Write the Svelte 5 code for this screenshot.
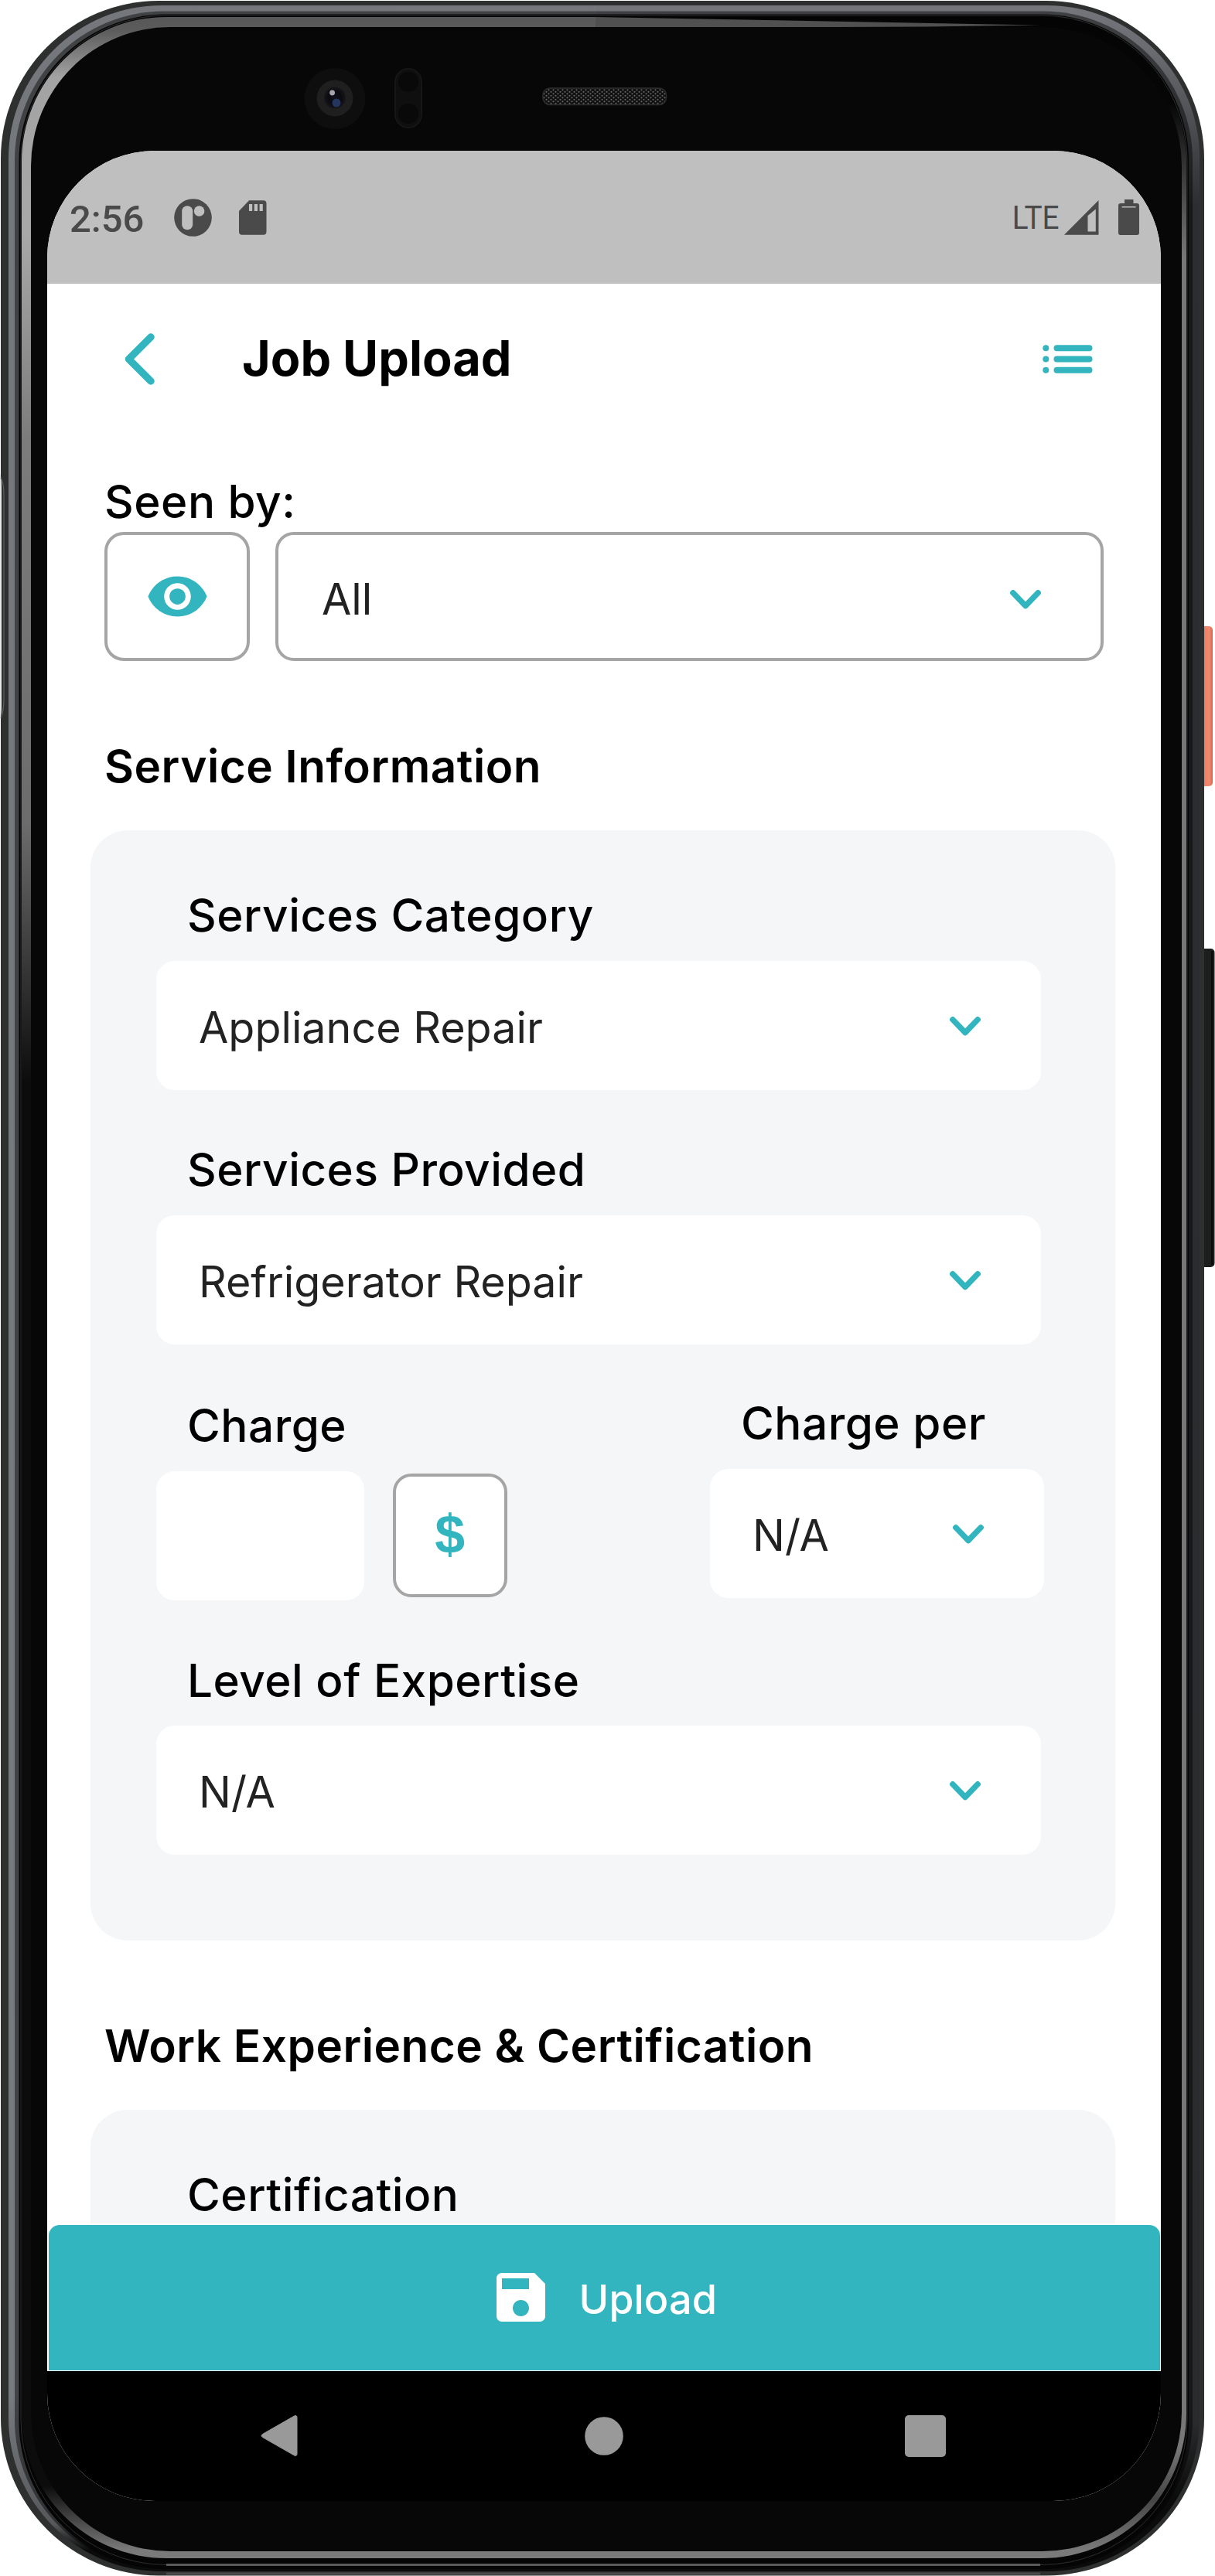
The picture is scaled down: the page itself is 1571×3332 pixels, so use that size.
<script>
  const fields = [
    { label: 'Services Category', value: 'Appliance Repair' },
    { label: 'Services Provided', value: 'Refrigerator Repair' }
  ];
</script>

{#snippet chevron()}
  <svg class="chevron" viewBox="0 0 40 25" width="40" height="25">
    <path d="M3.8 3.8 20 20.6 36.2 3.8" />
  </svg>
{/snippet}

{#snippet select(value)}
  <div class="select">
    <span>{value}</span>
    {@render chevron()}
  </div>
{/snippet}

<div class="phone">
  <!-- Device body -->
  <svg class="chassis" viewBox="0 0 1571 3332" width="1571" height="3332" aria-hidden="true">
    <defs>
      <linearGradient id="orange" x1="0" x2="1" y1="0" y2="0">
        <stop offset="0" stop-color="#c9543c" /><stop offset=".3" stop-color="#ee7b5f" />
        <stop offset=".75" stop-color="#f08a70" /><stop offset="1" stop-color="#d9644a" />
      </linearGradient>
      <linearGradient id="metalL" gradientUnits="userSpaceOnUse" x1="0" x2="0" y1="0" y2="3332">
        <stop offset="0" stop-color="#74777b" /><stop offset=".93" stop-color="#777a7f" />
        <stop offset=".98" stop-color="#55575a" /><stop offset=".99" stop-color="#0b0b0b" />
      </linearGradient>
      <linearGradient id="metalR" gradientUnits="userSpaceOnUse" x1="0" x2="0" y1="0" y2="3332">
        <stop offset="0" stop-color="#74777b" /><stop offset=".02" stop-color="#696b70" />
        <stop offset=".08" stop-color="#2b2d30" /><stop offset=".94" stop-color="#2a2b2d" />
        <stop offset=".97" stop-color="#0b0b0b" />
      </linearGradient>
      <linearGradient id="shineL" gradientUnits="userSpaceOnUse" x1="0" x2="0" y1="0" y2="3332">
        <stop offset="0" stop-color="#515151" /><stop offset=".012" stop-color="#5c5c5c" />
        <stop offset=".03" stop-color="#a3a3a3" /><stop offset=".09" stop-color="#a8a8a8" />
        <stop offset=".17" stop-color="#7c7c7c" /><stop offset=".32" stop-color="#6c6c6c" />
        <stop offset=".42" stop-color="#0c0c0d" /><stop offset=".965" stop-color="#0c0c0d" />
        <stop offset=".99" stop-color="#7a7a7a" />
      </linearGradient>
      <linearGradient id="shineR" gradientUnits="userSpaceOnUse" x1="0" x2="0" y1="0" y2="3332">
        <stop offset="0" stop-color="#040404" /><stop offset=".04" stop-color="#060606" />
        <stop offset=".1" stop-color="#777" /><stop offset=".95" stop-color="#777" />
        <stop offset=".97" stop-color="#454545" /><stop offset=".99" stop-color="#7a7a7a" />
      </linearGradient>
      <radialGradient id="lens">
        <stop offset="0" stop-color="#10121c" /><stop offset=".6" stop-color="#0a0a10" /><stop offset="1" stop-color="#17171a" />
      </radialGradient>
      <pattern id="mesh" width="6" height="5" patternUnits="userSpaceOnUse">
        <rect width="6" height="5" fill="#101010" />
        <circle cx="1.5" cy="1.3" r="1.1" fill="#626262" /><circle cx="4.5" cy="3.8" r="1.1" fill="#626262" />
      </pattern>
      <clipPath id="leftHalf"><rect x="0" y="0" width="771" height="3332" /></clipPath>
      <clipPath id="rightHalf"><rect x="771" y="0" width="800" height="3332" /></clipPath>
    </defs>

    <rect x="1550" y="810" width="18" height="207" rx="5" fill="url(#orange)" />
    <rect x="1550" y="1227" width="20.5" height="412" rx="5" fill="#1c1d1d" />
    <rect x="1566" y="1230" width="2" height="406" fill="#0a0a0a" />

    <rect x="1" y="1" width="1556" height="3330.5" rx="204" fill="#2e2f2f" />
    <path d="M0 612q2 5 2 20v280q0 12-2 18z" fill="#e3e8e5" />
    <path d="M1 618q4 6 4 22v265q0 14-4 24" fill="none" stroke="#5b6561" stroke-width="1.2" />
    <g clip-path="url(#leftHalf)">
      <rect x="11" y="7" width="1542" height="3319" rx="198" fill="url(#metalL)" />
    </g>
    <g clip-path="url(#rightHalf)">
      <rect x="8" y="7" width="1543" height="3319" rx="197" fill="url(#metalR)" />
    </g>
    <rect x="19" y="14.500" width="1523" height="3308.500" rx="193" fill="#000" opacity=".45" />
    <rect x="24.500" y="18.500" width="1512.500" height="3304" rx="190" fill="#050505" />
    <rect x="27" y="20" width="1508" height="3297.500" rx="188" fill="none" stroke="#2d2d2f" stroke-width="1" />
    <path d="M215 3317.500h1130" stroke="#5a5a5a" stroke-width="3" />
    <path d="M215 3329h1130" stroke="#4a4a4a" stroke-width="3" />
    <g clip-path="url(#leftHalf)">
      <rect x="28" y="22" width="1506" height="3287" rx="187" fill="url(#shineL)" />
    </g>
    <g clip-path="url(#rightHalf)">
      <rect x="28" y="22" width="1506" height="3287" rx="187" fill="url(#shineR)" />
    </g>
    <path d="M770 22 1345 32.500 1200 34.500 770 36z" fill="#505050" />
    <rect x="40" y="35" width="1488" height="3265" rx="180" fill="#070708" />

    <!-- Front camera, sensor and earpiece -->
    <circle cx="433" cy="127.500" r="39.500" fill="#0e0e0f" />
    <circle cx="433" cy="127" r="23.500" fill="#1f1f20" />
    <circle cx="433" cy="126.500" r="14" fill="url(#lens)" />
    <circle cx="435" cy="133" r="5.500" fill="#26355e" />
    <circle cx="429.600" cy="120" r="3.400" fill="#a5a5ab" />
    <rect x="511" y="89" width="34" height="76" rx="17" fill="#0f0f10" stroke="#161617" stroke-width="2" />
    <circle cx="528" cy="106" r="13" fill="#09090a" />
    <circle cx="528" cy="147" r="13" fill="#09090a" />
    <rect x="702" y="114" width="159.500" height="21.500" rx="9" fill="url(#mesh)" stroke="#2c2c2c" stroke-width="1.500" />
  </svg>

  <div class="screen">
    <div class="status">
      <span class="time">2:56</span>
      <svg class="badge" viewBox="0 0 49 49" width="49" height="49">
        <circle cx="24.500" cy="24.500" r="24.300" fill="#4a4a4a" />
        <rect x="10.200" y="9.200" width="14" height="31" rx="7" fill="#bfbfbf" />
        <circle cx="32.600" cy="16" r="6.800" fill="#bfbfbf" />
      </svg>
      <svg viewBox="0 0 36 45" width="36" height="45">
        <path d="M13 .3h18.500q4 0 4 4v36.400q0 4-4 4H4q-4 0-4-4V14z" fill="#4a4a4a" />
        <path d="M13 5h4.200v9H13zM19.800 5H24v9h-4.200zM26.600 5h4.200v9h-4.200z" fill="#bfbfbf" />
      </svg>
      <span class="network">LTE</span>
      <svg class="signal" viewBox="0 0 45 45" width="45" height="45">
        <path d="M44.500 0v44.700H0zM30.500 20v20.500h10.300V11.500z" fill="#4a4a4a" fill-rule="evenodd" />
      </svg>
      <svg viewBox="0 0 27 46" width="27" height="46">
        <path d="M8 0h11.500v5H24q3 0 3 3v35q0 3-3 3H3q-3 0-3-3V8q0-3 3-3h5z" fill="#4a4a4a" />
        <path d="M4.600 9.800h17.900" stroke="#bfbfbf" stroke-width="1.600" />
      </svg>
    </div>

    <main>
      <header>
        <svg viewBox="0 0 39 67" width="39" height="67">
          <path class="back" d="M34 5 5.500 33.500 34 62" />
        </svg>
        <h1>Job Upload</h1>
        <svg class="menu" viewBox="0 0 65 37" width="65" height="37">
          {#each [4.200, 18.500, 32.700] as y}
            <circle cx="4.300" cy={y} r="4" />
            <rect x="14.500" y={y - 4} width="50" height="8" rx="4" />
          {/each}
        </svg>
      </header>

      <section class="seen">
        <div class="label">Seen by:</div>
        <div class="seen-row">
          <div class="eye">
            <svg viewBox="0 0 24 24" width="83" height="83">
              <path d="M12 4.500C7 4.500 2.730 7.610 1 12c1.730 4.390 6 7.500 11 7.500s9.270-3.110 11-7.500c-1.730-4.390-6-7.500-11-7.500zM12 17c-2.760 0-5-2.240-5-5s2.240-5 5-5 5 2.240 5 5-2.240 5-5 5zm0-8c-1.660 0-3 1.340-3 3s1.340 3 3 3 3-1.340 3-3-1.340-3-3-3z" />
            </svg>
          </div>
          {@render select('All')}
        </div>
      </section>

      <h2>Service Information</h2>
      <section class="card">
        {#each fields as field}
          <div class="field">
            <div class="label">{field.label}</div>
            {@render select(field.value)}
          </div>
        {/each}
        <div class="charges">
          <div class="charge">
            <div class="label">Charge</div>
            <div class="charge-row">
              <div class="amount"></div>
              <div class="currency">$</div>
            </div>
          </div>
          <div class="per">
            <div class="label">Charge per</div>
            {@render select('N/A')}
          </div>
        </div>
        <div class="field">
          <div class="label">Level of Expertise</div>
          {@render select('N/A')}
        </div>
      </section>

      <h2 class="second">Work Experience &amp; Certification</h2>
      <section class="card">
        <div class="label">Certification</div>
      </section>
    </main>

    <div class="dock">
      <button class="upload">
        <svg viewBox="3 3 18 18" width="63" height="63">
          <path d="M17 3H5c-1.110 0-2 .9-2 2v14c0 1.100.89 2 2 2h14c1.100 0 2-.9 2-2V7l-4-4zm-5 16c-1.660 0-3-1.340-3-3s1.340-3 3-3 3 1.340 3 3-1.340 3-3 3zm3-10H5V5h10v4z" />
        </svg>
        <span>Upload</span>
      </button>
    </div>

    <nav>
      <svg viewBox="0 0 50 58" width="50" height="58">
        <path d="M44.500 3.500 3.500 27q-3 2 0 4l41 23.500q3.500 1.500 3.500-2V5.500q0-3.500-3.500-2z" transform="translate(0 -.5)" stroke="#999" stroke-width="1" />
      </svg>
      <svg class="home" viewBox="0 0 50 50" width="50" height="50"><circle cx="25" cy="25" r="24.800" /></svg>
      <svg viewBox="0 0 53 54" width="53" height="54"><rect width="53" height="54" rx="5" /></svg>
    </nav>
  </div>
</div>

<style>
  :global(body) {
    background: #fff;
  }

  .phone {
    position: relative;
    box-sizing: border-box;
    width: 1571px;
    height: 3332px;
    padding: 195px 70px 97px 61px;
    overflow: hidden;
    font-family: Inter, 'Liberation Sans', sans-serif;
    color: #000;
  }

  .phone * {
    box-sizing: border-box;
  }

  .phone svg {
    flex: none;
    display: block;
  }

  .chassis {
    position: absolute;
    inset: 0;
  }

  .screen {
    position: relative;
    display: flex;
    flex-direction: column;
    height: 3040px;
    border-radius: 139px;
    overflow: hidden;
    background: #fff;
  }

  .status {
    flex: none;
    display: flex;
    align-items: center;
    height: 172px;
    padding: 0 28px 0 29px;
    background: #bfbfbf;
    color: #4a4a4a;
    font-family: Roboto, sans-serif;
  }

  .time {
    width: 135px;
    padding-top: 4px;
    font-size: 49px;
    font-weight: 500;
  }

  .badge {
    margin-right: 35px;
  }

  .network {
    margin-left: auto;
    font-size: 43px;
    transform: scaleX(0.9);
    transform-origin: right;
  }

  .signal {
    margin: 0 25px 0 7px;
  }

  main {
    flex: 1;
    min-height: 0;
    overflow: hidden;
  }

  header {
    display: flex;
    align-items: center;
    height: 195px;
    padding: 0 88px 0 100px;
  }

  .back {
    fill: none;
    stroke: #32b5be;
    stroke-width: 9.5;
    stroke-linecap: round;
    stroke-linejoin: round;
  }

  h1 {
    margin: 0 auto 4px 113px;
    font-size: 63px;
    line-height: 76px;
    font-weight: 700;
  }

  .menu,
  .eye svg {
    fill: #32b5be;
  }

  .label,
  h2 {
    margin: 0;
    font-size: 58.4px;
    line-height: 70px;
    letter-spacing: 0.52px;
    white-space: nowrap;
  }

  .label {
    font-weight: 500;
  }

  .seen {
    padding: 52px 74px 0;
  }

  .seen-row {
    display: flex;
    gap: 33px;
    margin-top: 4px;
  }

  .eye {
    display: flex;
    align-items: center;
    justify-content: center;
    width: 188px;
    border: 4px solid #a5a5a5;
    border-radius: 25px;
  }

  .seen-row :global(.select) {
    flex: 1;
    padding: 2px 77px 0 56px;
    border: 4px solid #a5a5a5;
  }

  .seen-row :global(.chevron) {
    margin-top: 5px;
  }

  .select {
    display: flex;
    align-items: center;
    justify-content: space-between;
    height: 167px;
    padding: 0 78px 0 55px;
    border-radius: 24px;
    background: #fff;
    color: #222;
    font-size: 55.6px;
    line-height: 70px;
  }

  .select span {
    padding-top: 5px;
  }

  .chevron {
    margin-top: 2px;
  }

  .chevron path {
    fill: none;
    stroke: #32b5be;
    stroke-width: 7.4;
    stroke-linecap: round;
    stroke-linejoin: round;
  }

  h2 {
    margin: 101px 0 48px 74px;
    font-weight: 600;
  }

  h2.second {
    margin-top: 101px;
  }

  .card {
    width: 1325px;
    height: 1436px;
    margin-left: 56px;
    padding: 75px 96px 0 85px;
    border-radius: 48px;
    background: #f5f6f8;
  }

  .card .label {
    margin: 0 0 23.5px 40px;
  }

  .field {
    margin-bottom: 68.5px;
  }

  .charges {
    display: flex;
    justify-content: space-between;
    margin: -1px -4px 69px 0;
  }

  .charge {
    padding-top: 3px;
  }

  .charge-row {
    display: flex;
    align-items: center;
    gap: 37px;
  }

  .amount {
    width: 269px;
    height: 167px;
    border-radius: 24px;
    background: #fff;
  }

  .currency {
    display: flex;
    justify-content: center;
    width: 147.5px;
    height: 160px;
    border: 4px solid #a5a5a5;
    border-radius: 24px;
    background: #fff;
    color: #32b5be;
    font: 700 70px/150px 'Liberation Sans', sans-serif;
  }

  .per {
    width: 432px;
  }

  .dock {
    flex: none;
    height: 191px;
    padding: 2px 1.5px 1.5px;
    background: #fff;
    border-radius: 14px 14px 0 0;
  }

  .upload {
    display: flex;
    align-items: center;
    width: 100%;
    height: 100%;
    margin: 0;
    padding: 0 0 0 579px;
    border: 0;
    border-radius: 14px 14px 0 0;
    background: #32b5be;
    color: #fff;
    fill: #fff;
    font: 500 52.2px/64px Inter, sans-serif;
    gap: 44px;
    letter-spacing: 0.1px;
  }

  .upload span {
    padding-top: 5px;
  }

  nav {
    flex: none;
    display: flex;
    align-items: center;
    justify-content: space-between;
    height: 168px;
    padding: 0 278px 0 275px;
    background: #000;
    fill: #999;
  }

  .home {
    margin-left: 5px;
  }
</style>
